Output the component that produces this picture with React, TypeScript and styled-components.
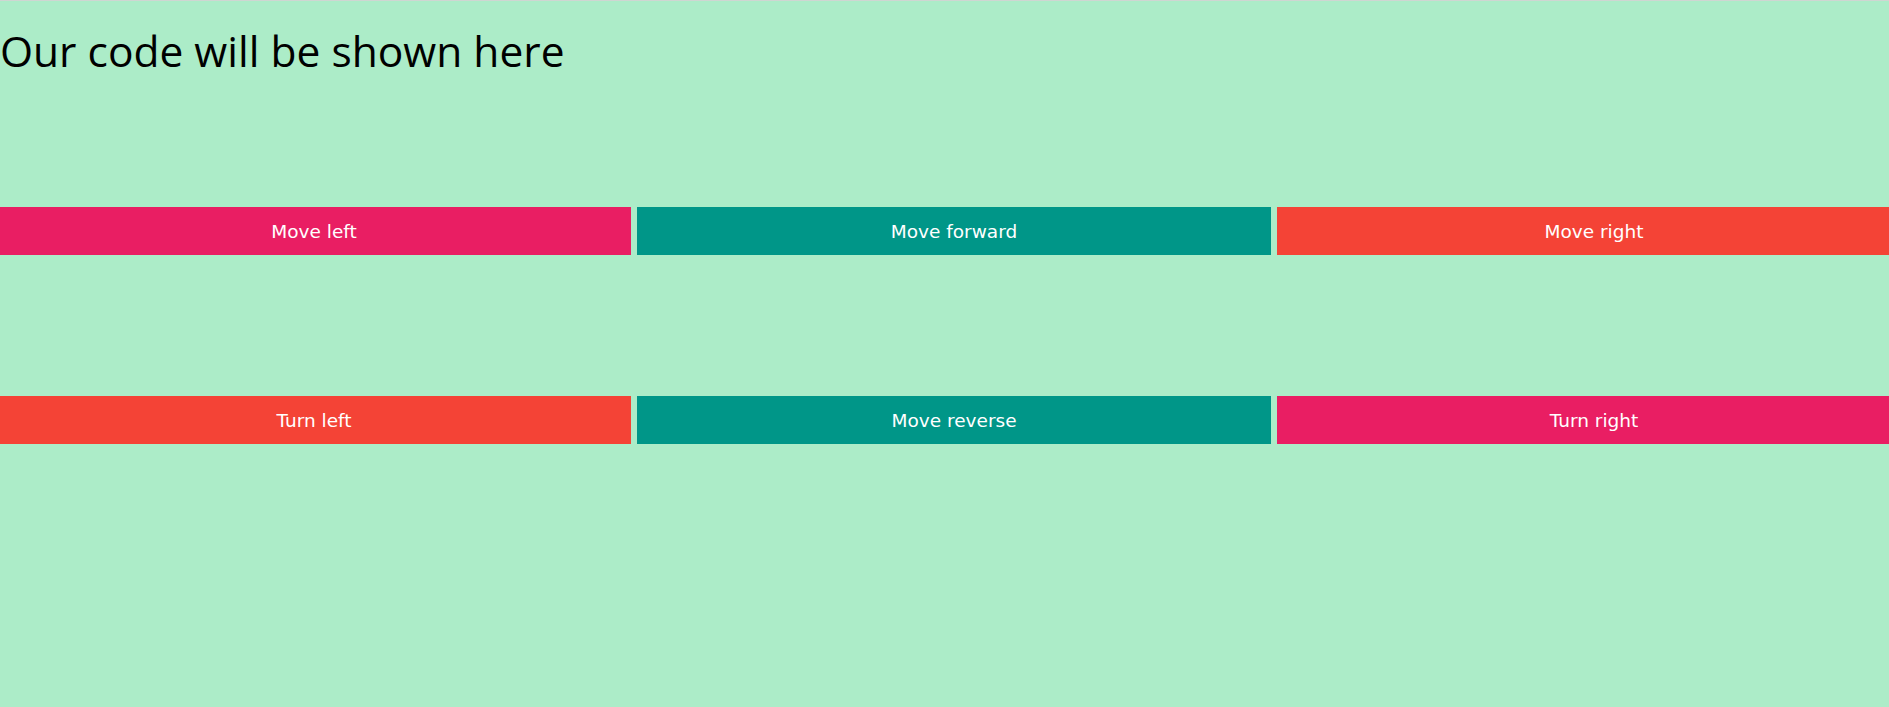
import React from "react";
import styled, { createGlobalStyle } from "styled-components";

const GlobalStyle = createGlobalStyle`
  html, body {
    margin: 0;
    padding: 0;
    background: #acecc8;
    overflow: hidden;
  }
  body {
    border-top: 1px solid #cfd6d2;
    min-height: 706px;
  }
`;

const Page = styled.main`
  display: flex;
  flex-direction: column;
  width: 1889px;
  overflow: hidden;
`;

const Heading = styled.h1`
  margin: 0;
  padding: 20px 0 0 0;
  height: 206px;
  box-sizing: border-box;
  font-family: "Open Sans", "Noto Sans", sans-serif;
  font-weight: 400;
  font-size: 42.5px;
  line-height: 60px;
  color: #000;
`;

const Row = styled.div<{ $mb: number }>`
  display: flex;
  gap: 6px;
  margin-left: -3px;
  margin-bottom: ${(p) => p.$mb}px;
`;

const ControlButton = styled.button<{ $bg: string }>`
  flex: 0 0 634px;
  height: 48px;
  border: none;
  margin: 0;
  padding: 0;
  background: ${(p) => p.$bg};
  color: #fff;
  font-family: "DejaVu Sans", Verdana, sans-serif;
  font-size: 18.5px;
  cursor: pointer;
`;

const PINK = "#e91e63";
const TEAL = "#009688";
const RED = "#f44336";

const rows = [
  [
    { label: "Move left", bg: PINK },
    { label: "Move forward", bg: TEAL },
    { label: "Move right", bg: RED },
  ],
  [
    { label: "Turn left", bg: RED },
    { label: "Move reverse", bg: TEAL },
    { label: "Turn right", bg: PINK },
  ],
];

export default function App() {
  return (
    <>
      <GlobalStyle />
      <Page>
        <Heading>Our code will be shown here</Heading>
        {rows.map((r, i) => (
          <Row key={i} $mb={i === 0 ? 141 : 0}>
            {r.map((b) => (
              <ControlButton key={b.label} $bg={b.bg}>
                {b.label}
              </ControlButton>
            ))}
          </Row>
        ))}
      </Page>
    </>
  );
}
